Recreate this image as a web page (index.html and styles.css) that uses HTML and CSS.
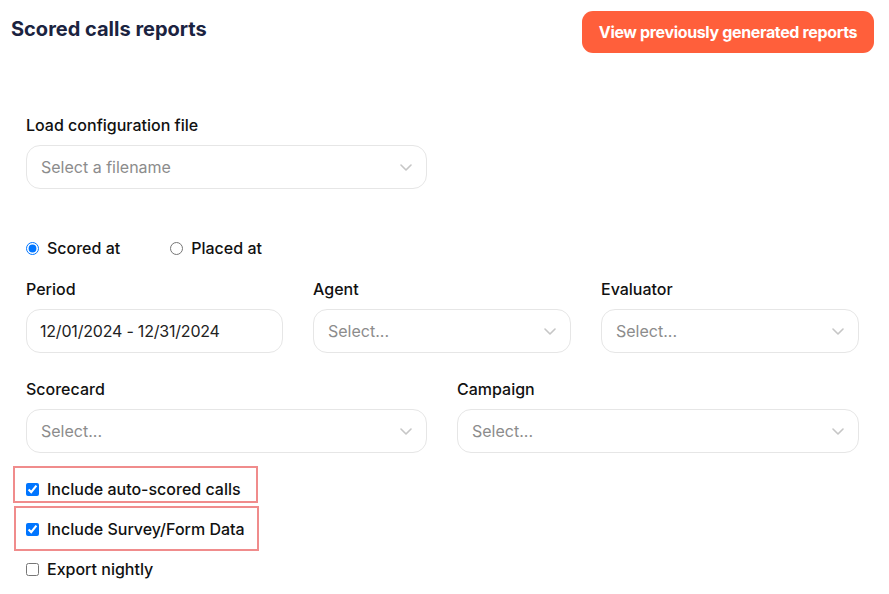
FILE: index.html
```html
<!DOCTYPE html>
<html>
<head>
<meta charset="utf-8">
<link rel="stylesheet" href="styles.css">
</head>
<body>
<header class="top">
  <h1 class="title">Scored calls reports</h1>
  <button class="btn-primary">View previously generated reports</button>
</header>
<main class="form">
  <section class="field cfg">
    <div class="label">Load configuration file</div>
    <div class="select">
      <span class="ph">Select a filename</span>
      <svg class="chev" width="12" height="7" viewBox="0 0 12 7"><path d="M1 1 L6 6 L11 1" fill="none" stroke="#c6c6c6" stroke-width="1.6" stroke-linecap="round" stroke-linejoin="round"/></svg>
    </div>
  </section>

  <div class="radios">
    <label class="opt"><input type="radio" name="t" checked><span>Scored at</span></label>
    <label class="opt"><input type="radio" name="t"><span>Placed at</span></label>
  </div>

  <div class="grid3">
    <div class="field">
      <div class="label">Period</div>
      <div class="select"><span class="val">12/01/2024 - 12/31/2024</span></div>
    </div>
    <div class="field">
      <div class="label">Agent</div>
      <div class="select"><span class="ph">Select...</span>
        <svg class="chev" width="12" height="7" viewBox="0 0 12 7"><path d="M1 1 L6 6 L11 1" fill="none" stroke="#c6c6c6" stroke-width="1.6" stroke-linecap="round" stroke-linejoin="round"/></svg></div>
    </div>
    <div class="field">
      <div class="label">Evaluator</div>
      <div class="select"><span class="ph">Select...</span>
        <svg class="chev" width="12" height="7" viewBox="0 0 12 7"><path d="M1 1 L6 6 L11 1" fill="none" stroke="#c6c6c6" stroke-width="1.6" stroke-linecap="round" stroke-linejoin="round"/></svg></div>
    </div>
  </div>

  <div class="grid2">
    <div class="field">
      <div class="label">Scorecard</div>
      <div class="select"><span class="ph">Select...</span>
        <svg class="chev" width="12" height="7" viewBox="0 0 12 7"><path d="M1 1 L6 6 L11 1" fill="none" stroke="#c6c6c6" stroke-width="1.6" stroke-linecap="round" stroke-linejoin="round"/></svg></div>
    </div>
    <div class="field">
      <div class="label">Campaign</div>
      <div class="select"><span class="ph">Select...</span>
        <svg class="chev" width="12" height="7" viewBox="0 0 12 7"><path d="M1 1 L6 6 L11 1" fill="none" stroke="#c6c6c6" stroke-width="1.6" stroke-linecap="round" stroke-linejoin="round"/></svg></div>
    </div>
  </div>

  <div class="checks">
    <div class="hl hl1"><label class="opt"><input type="checkbox" checked><span>Include auto-scored calls</span></label></div>
    <div class="hl hl2"><label class="opt"><input type="checkbox" checked><span>Include Survey/Form Data</span></label></div>
    <div class="plain"><label class="opt"><input type="checkbox"><span>Export nightly</span></label></div>
  </div>
</main>
</body>
</html>
```
FILE: styles.css
```css
* { box-sizing: border-box; }
html, body { margin: 0; padding: 0; background: #fff; }
body {
  font-family: "Inter", "Open Sans", "Liberation Sans", sans-serif;
  color: #111;
  width: 889px;
  height: 594px;
  overflow: hidden;
}
.top {
  display: flex;
  justify-content: space-between;
  align-items: flex-start;
  padding: 11px 15px 0 11px;
}
.title {
  margin: 6px 0 0 0;
  font-size: 20px;
  line-height: 24px;
  font-weight: 700;
  color: #1b2340;
  letter-spacing: 0;
}
.btn-primary {
  height: 42px;
  width: 292px;
  border: none;
  border-radius: 11px;
  background: #ff5f3b;
  color: #fff;
  font-family: inherit;
  font-size: 16px;
  font-weight: 700;
  letter-spacing: -0.35px;
  padding: 0;
}
.form {
  padding: 0 30px 0 26px;
}
.cfg { margin-top: 62px; width: 401px; }
.field { display: flex; flex-direction: column; }
.label {
  font-size: 16px;
  line-height: 20px;
  font-weight: 500;
  color: #111;
  margin-bottom: 10px;
}
.select {
  height: 44px;
  border: 1px solid #e6e6e6;
  border-radius: 14px;
  display: flex;
  align-items: center;
  justify-content: space-between;
  padding: 0 14px 0 14px;
  background: #fff;
}
.ph { color: #8c8c8c; font-size: 16px; }
.val { color: #222; font-size: 16px; letter-spacing: -0.2px; margin-left: -1px; }
.chev { flex: none; margin-top: 1px; }
.radios {
  display: flex;
  gap: 50px;
  margin-top: 49px;
  height: 20px;
}
.opt {
  display: flex;
  align-items: center;
  gap: 8px;
  font-size: 16px;
  line-height: 20px;
  font-weight: 500;
  color: #111;
}
.opt input { margin: 0; width: 13px; height: 13px; flex: none; }
.grid3 {
  display: grid;
  grid-template-columns: 257px 258px 258px;
  column-gap: 30px;
  margin-top: 21px;
}
.grid2 {
  display: grid;
  grid-template-columns: 401px 402px;
  column-gap: 30px;
  margin-top: 26px;
}
.checks { display: flex; flex-direction: column; margin-top: 13px; }
.hl {
  border: 2px solid #f08c8c;
  width: 245px;
}
.hl1 { margin-left: -13px; padding: 11px 0 1px 11px; height: 37px; }
.hl2 { margin-left: -12px; margin-top: 3px; padding: 11px 0 10px 10px; height: 45px; }
.plain { margin-top: 8px; }
```
